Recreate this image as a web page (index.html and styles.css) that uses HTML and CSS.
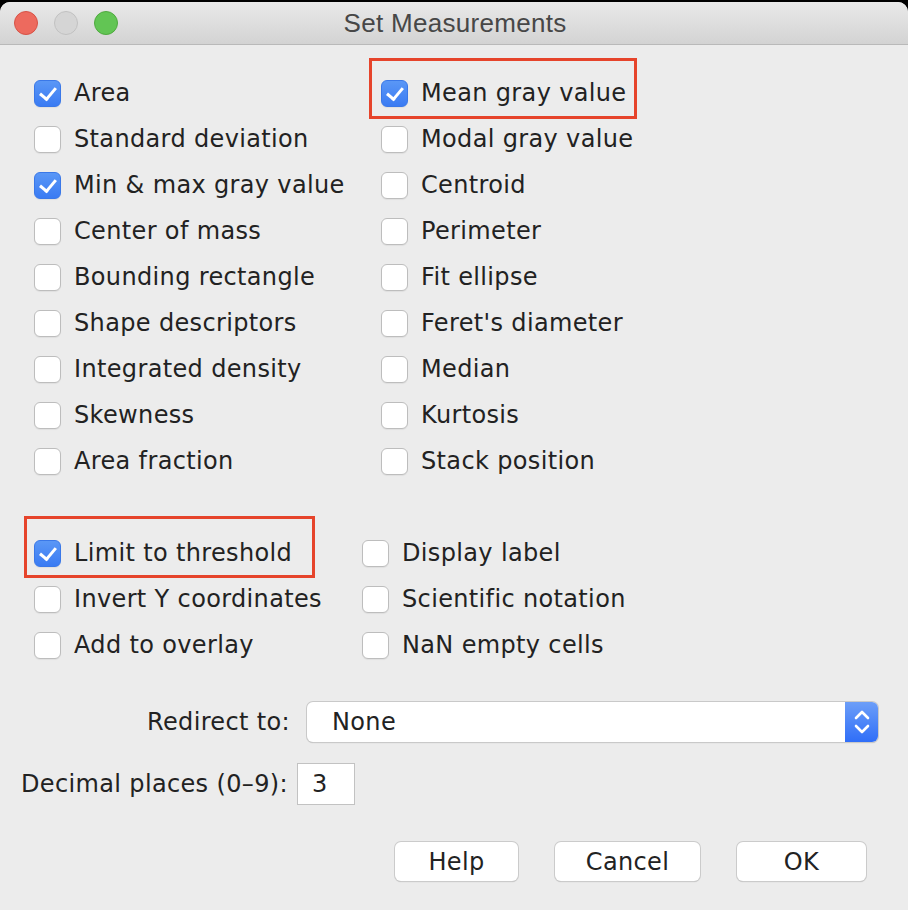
FILE: index.html
```html
<!DOCTYPE html>
<html>
<head>
<meta charset="utf-8">
<title>Set Measurements</title>
<link rel="stylesheet" href="styles.css">
</head>
<body>
<div class="window">
  <div class="titlebar">
    <div class="lights">
      <span class="light red"></span>
      <span class="light gray"></span>
      <span class="light green"></span>
    </div>
    <div class="title">Set Measurements</div>
  </div>
  <div class="content">
    <div class="grid grid-top">
      <label class="cb on"><span class="box"></span>Area</label>
      <label class="cb on mark mark-mean"><span class="box"></span>Mean gray value</label>
      <label class="cb"><span class="box"></span>Standard deviation</label>
      <label class="cb"><span class="box"></span>Modal gray value</label>
      <label class="cb on"><span class="box"></span>Min &amp; max gray value</label>
      <label class="cb"><span class="box"></span>Centroid</label>
      <label class="cb"><span class="box"></span>Center of mass</label>
      <label class="cb"><span class="box"></span>Perimeter</label>
      <label class="cb"><span class="box"></span>Bounding rectangle</label>
      <label class="cb"><span class="box"></span>Fit ellipse</label>
      <label class="cb"><span class="box"></span>Shape descriptors</label>
      <label class="cb"><span class="box"></span>Feret's diameter</label>
      <label class="cb"><span class="box"></span>Integrated density</label>
      <label class="cb"><span class="box"></span>Median</label>
      <label class="cb"><span class="box"></span>Skewness</label>
      <label class="cb"><span class="box"></span>Kurtosis</label>
      <label class="cb"><span class="box"></span>Area fraction</label>
      <label class="cb"><span class="box"></span>Stack position</label>
    </div>
    <div class="grid grid-bottom">
      <label class="cb on mark mark-limit"><span class="box"></span>Limit to threshold</label>
      <label class="cb"><span class="box"></span>Display label</label>
      <label class="cb"><span class="box"></span>Invert Y coordinates</label>
      <label class="cb"><span class="box"></span>Scientific notation</label>
      <label class="cb"><span class="box"></span>Add to overlay</label>
      <label class="cb"><span class="box"></span>NaN empty cells</label>
    </div>
    <div class="redirect-row">
      <span class="field-label">Redirect to:</span>
      <div class="select">
        <span class="select-value">None</span>
        <span class="stepper">
          <svg width="20" height="30" viewBox="0 0 20 30">
            <path d="M4 11 L10 5 L16 11" fill="none" stroke="#fff" stroke-width="2.6" stroke-linecap="round" stroke-linejoin="round"/>
            <path d="M4 19 L10 25 L16 19" fill="none" stroke="#fff" stroke-width="2.6" stroke-linecap="round" stroke-linejoin="round"/>
          </svg>
        </span>
      </div>
    </div>
    <div class="decimal-row">
      <span class="field-label">Decimal places (0–9):</span>
      <span class="textbox">3</span>
    </div>
    <div class="buttons">
      <button class="btn btn-help">Help</button>
      <button class="btn btn-cancel">Cancel</button>
      <button class="btn btn-ok">OK</button>
    </div>
  </div>
</div>
</body>
</html>
```
FILE: styles.css
```css
html, body {
  margin: 0;
  padding: 0;
  background: #000;
}
body {
  width: 908px;
  height: 910px;
  overflow: hidden;
  font-family: "DejaVu Sans", "Noto Sans", sans-serif;
  color: #222;
}
.window {
  margin-top: 2px;
  height: 908px;
  background: #ececec;
  border-radius: 10px 10px 0 0;
  overflow: hidden;
}
.titlebar {
  height: 42px;
  background: linear-gradient(#e9e9e9, #d3d3d3);
  border-bottom: 1px solid #b9b9b9;
  display: flex;
  align-items: center;
  position: relative;
}
.lights {
  display: flex;
  gap: 16px;
  padding-left: 14px;
}
.light {
  width: 24px;
  height: 24px;
  border-radius: 50%;
  box-sizing: border-box;
}
.light.red { background: #ed6a5e; border: 1px solid #d65246; }
.light.gray { background: #d5d5d5; border: 1px solid #c1c1c1; }
.light.green { background: #62c554; border: 1px solid #4fa93f; }
.title {
  position: absolute;
  left: 0;
  right: 0;
  text-align: center;
  font-family: "Liberation Sans", Arial, sans-serif;
  font-size: 26px;
  letter-spacing: 0.3px;
  color: #474747;
  padding-left: 2px;
}
.content {
  padding-top: 25px;
}
.grid {
  display: grid;
  grid-auto-rows: 46px;
  padding-left: 34px;
}
.grid-top {
  grid-template-columns: 347px auto;
}
.grid-bottom {
  margin-top: 46px;
  grid-template-columns: 328px auto;
}
.cb {
  display: flex;
  align-items: center;
  font-size: 24px;
  letter-spacing: 0.35px;
  white-space: nowrap;
  position: relative;
  justify-self: start;
}
.box {
  width: 27px;
  height: 27px;
  box-sizing: border-box;
  border-radius: 6px;
  background: #fff;
  border: 1px solid #bdbdbd;
  box-shadow: 0 1px 1px rgba(0,0,0,0.06);
  margin-right: 13px;
  flex: none;
  position: relative;
}
.cb.on .box {
  background: linear-gradient(#5a97f6, #3a7bf3);
  border: 1px solid #3a78e8;
}
.cb.on .box::after {
  content: "";
  position: absolute;
  left: 8px;
  top: 3px;
  width: 7px;
  height: 13px;
  border-right: 3px solid #fff;
  border-bottom: 3px solid #fff;
  transform: rotate(40deg);
}
.mark::before {
  content: "";
  position: absolute;
  border: 3.5px solid #e6442b;
  pointer-events: none;
}
.mark-mean::before {
  left: -12px;
  top: -12px;
  right: -11px;
  bottom: -3px;
}
.mark-limit::before {
  left: -10px;
  top: -14px;
  right: -23px;
  bottom: -2px;
}
.redirect-row {
  display: flex;
  align-items: center;
  margin-top: 34px;
  padding-left: 147px;
  height: 40px;
}
.field-label {
  font-size: 24px;
  letter-spacing: 0.35px;
  white-space: nowrap;
}
.select {
  margin-left: 17px;
  width: 571px;
  height: 40px;
  box-sizing: border-box;
  background: #fff;
  border-radius: 6px;
  box-shadow: 0 0 0 1px #c9c9c9, 0 1px 1px rgba(0,0,0,0.25);
  display: flex;
  align-items: center;
  overflow: hidden;
}
.select-value {
  flex: 1;
  padding-left: 25px;
  font-size: 24px;
  letter-spacing: 0.35px;
}
.stepper {
  width: 33px;
  height: 40px;
  background: linear-gradient(#6c9ef8, #2f6ef8);
  display: flex;
  align-items: center;
  justify-content: center;
}
.decimal-row {
  display: flex;
  align-items: center;
  margin-top: 21px;
  padding-left: 21px;
  height: 42px;
}
.textbox {
  margin-left: 9px;
  width: 58px;
  height: 42px;
  box-sizing: border-box;
  background: #fff;
  border: 1px solid #c2c2c2;
  font-size: 24px;
  padding-left: 14px;
  display: flex;
  align-items: center;
}
.buttons {
  display: flex;
  margin-top: 37px;
  padding-left: 395px;
  gap: 37px;
}
.btn {
  height: 39px;
  font-family: "DejaVu Sans", sans-serif;
  font-size: 24px;
  letter-spacing: 0.35px;
  color: #222;
  background: #fff;
  border: none;
  border-radius: 6px;
  box-shadow: 0 0 0 1px #cbcbcb, 0 1px 1px rgba(0,0,0,0.25);
  padding: 0;
}
.btn-help { width: 123px; }
.btn-cancel { width: 145px; }
.btn-ok { width: 129px; }
```
